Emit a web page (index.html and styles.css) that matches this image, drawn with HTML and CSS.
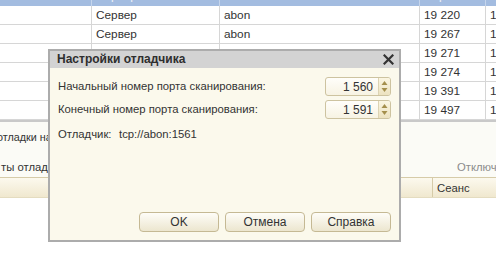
FILE: index.html
```html
<!DOCTYPE html>
<html lang="ru">
<head>
  <meta charset="UTF-8" />
  <title>Настройки отладчика</title>
  <link rel="stylesheet" href="styles.css">
</head>
<body>
  <div class="app">
    <div class="grid">
      <div class="row head">
        <div class="cell c1"></div><div class="cell c2">Сервер</div><div class="cell c3">abon</div><div class="cell c4">Порт</div><div class="cell c5">Т</div>
      </div>
      <div class="row"><div class="cell c1"></div><div class="cell c2">Сервер</div><div class="cell c3">abon</div><div class="cell c4">19 220</div><div class="cell c5">1</div></div>
      <div class="row"><div class="cell c1"></div><div class="cell c2">Сервер</div><div class="cell c3">abon</div><div class="cell c4">19 267</div><div class="cell c5">1</div></div>
      <div class="row"><div class="cell c1"></div><div class="cell c2">Сервер</div><div class="cell c3">abon</div><div class="cell c4">19 271</div><div class="cell c5">1</div></div>
      <div class="row"><div class="cell c1"></div><div class="cell c2">Сервер</div><div class="cell c3">abon</div><div class="cell c4">19 274</div><div class="cell c5">1</div></div>
      <div class="row"><div class="cell c1"></div><div class="cell c2">Сервер</div><div class="cell c3">abon</div><div class="cell c4">19 391</div><div class="cell c5">1</div></div>
      <div class="row"><div class="cell c1"></div><div class="cell c2">Сервер</div><div class="cell c3">abon</div><div class="cell c4">19 497</div><div class="cell c5">1</div></div>
    </div>

    <div class="panel">
      <div class="panel-line first">отладки на уровне сервера</div>
      <div class="panel-line split">
        <span class="pl-left">ты отладки</span>
        <span class="off-link">Отключить</span>
      </div>
    </div>

    <div class="list-head">
      <div class="lh-cell lh-a"></div>
      <div class="lh-cell lh-b">Сеанс</div>
    </div>
    <div class="list-body"></div>

    <div class="dialog">
      <div class="dialog-title">
        <span>Настройки отладчика</span>
        <svg class="close" width="11" height="11" viewBox="0 0 11 11">
          <path d="M1.5 1.5 L9.5 9.5 M9.5 1.5 L1.5 9.5" stroke="#333" stroke-width="2.2" stroke-linecap="square"/>
        </svg>
      </div>
      <div class="dialog-body">
        <div class="form">
          <label>Начальный номер порта сканирования:</label>
          <div class="spin-field">
            <span class="spin-value">1 560</span>
            <span class="spin-btn">
              <svg width="7" height="13" viewBox="0 0 7 13"><path d="M3.5 1 L6.5 5 L0.5 5 Z M3.5 12 L6.5 8 L0.5 8 Z" fill="#a48f4c"/></svg>
            </span>
          </div>
          <label>Конечный номер порта сканирования:</label>
          <div class="spin-field">
            <span class="spin-value">1 591</span>
            <span class="spin-btn">
              <svg width="7" height="13" viewBox="0 0 7 13"><path d="M3.5 1 L6.5 5 L0.5 5 Z M3.5 12 L6.5 8 L0.5 8 Z" fill="#a48f4c"/></svg>
            </span>
          </div>
        </div>
        <div class="debugger-row">
          <span class="debugger-label">Отладчик:</span>
          <span>tcp://abon:1561</span>
        </div>
        <div class="buttons">
          <button class="btn">OK</button>
          <button class="btn">Отмена</button>
          <button class="btn">Справка</button>
        </div>
      </div>
    </div>
  </div>
</body>
</html>
```

FILE: styles.css
```css
body {
  margin: 0;
  font-family: "Liberation Sans", Arial, sans-serif;
  font-size: 11.3px;
  color: #333;
  background: #fff;
}
.app {
  position: relative;
  width: 496px;
  height: 273px;
  overflow: hidden;
}
.grid {
  border-bottom: 2px solid #c9c9c9;
}
.row {
  display: grid;
  grid-template-columns: 92px 128px 200px 66px 30px;
  height: 19px;
  border-bottom: 1px solid #d6d6d6;
  box-sizing: border-box;
  background: #fff;
  font-size: 11.8px;
}
.row.head {
  margin-top: -13px;
  background: #a3bce0;
  color: #eef3fa;
  border-bottom: none;
}
.cell {
  border-right: 1px solid #d6d6d6;
  padding-left: 4px;
  line-height: 18px;
  white-space: nowrap;
  overflow: hidden;
}
.head .cell {
  border-right-color: #c5d5ec;
}
.c1 {
  padding-left: 0;
}
.panel {
  background: #fbfbf6;
  padding-top: 6px;
}
.panel-line {
  height: 19px;
  line-height: 19px;
  white-space: nowrap;
}
.panel-line.first {
  margin-left: -3px;
  margin-bottom: 11px;
  font-size: 10.8px;
}
.panel-line.split {
  display: flex;
  margin-left: 1px;
}
.pl-left {
  width: 456px;
  flex-shrink: 0;
}
.off-link {
  color: #8c8c8c;
}
.list-head {
  display: flex;
  height: 21px;
  border-top: 1px solid #d6cba8;
  border-bottom: 1px solid #e4dcc0;
  background: linear-gradient(#fcf9ee, #f0e8cf);
  box-sizing: border-box;
}
.lh-cell {
  line-height: 20px;
  border-right: 1px solid #d6cba8;
}
.lh-a {
  width: 432px;
}
.lh-b {
  padding-left: 4px;
  flex: 1;
  border-right: none;
}
.list-body {
  height: 80px;
  background: #fff;
}

/* dialog */
.dialog {
  position: absolute;
  left: 48px;
  top: 49px;
  width: 353px;
  height: 193px;
  box-sizing: border-box;
  border: 2px solid #acacac;
  background: #fbf9ec;
  display: flex;
  flex-direction: column;
}
.dialog-title {
  height: 16px;
  background: #d3d3d3;
  display: flex;
  align-items: center;
  justify-content: space-between;
  padding: 0 5px 1px 7px;
  font-size: 12px;
  font-weight: bold;
  color: #2e2e2e;
}
.dialog-body {
  flex: 1;
  display: flex;
  flex-direction: column;
  padding: 9px 8px 8px 8px;
}
.form {
  display: grid;
  grid-template-columns: 1fr 66px;
  row-gap: 4px;
  align-items: center;
}
.form label {
  line-height: 19px;
}
.spin-field {
  display: flex;
  align-items: center;
  height: 19px;
  box-sizing: border-box;
  border: 1px solid #cdc3a0;
  border-radius: 3px;
  background: linear-gradient(#fffefa, #f7f3e3);
  font-size: 12px;
}
.spin-value {
  flex: 1;
  text-align: right;
  padding-right: 5px;
}
.spin-btn {
  width: 11px;
  height: 17px;
  display: flex;
  align-items: center;
  justify-content: center;
  border-left: 1px solid #dcd3b3;
  border-radius: 0 2px 2px 0;
  background: linear-gradient(#fbf6e2, #ece2c0);
}
.debugger-row {
  margin-top: 6px;
  line-height: 19px;
  display: flex;
}
.debugger-label {
  width: 61px;
  flex-shrink: 0;
}
.buttons {
  margin-top: auto;
  display: flex;
  justify-content: flex-end;
  gap: 6px;
}
.btn {
  width: 80px;
  height: 20px;
  padding: 0;
  font-family: inherit;
  font-size: 12px;
  color: #333;
  border: 1px solid #c5b994;
  border-radius: 4px;
  background: linear-gradient(#fefdf8, #ece6cf);
}
```
